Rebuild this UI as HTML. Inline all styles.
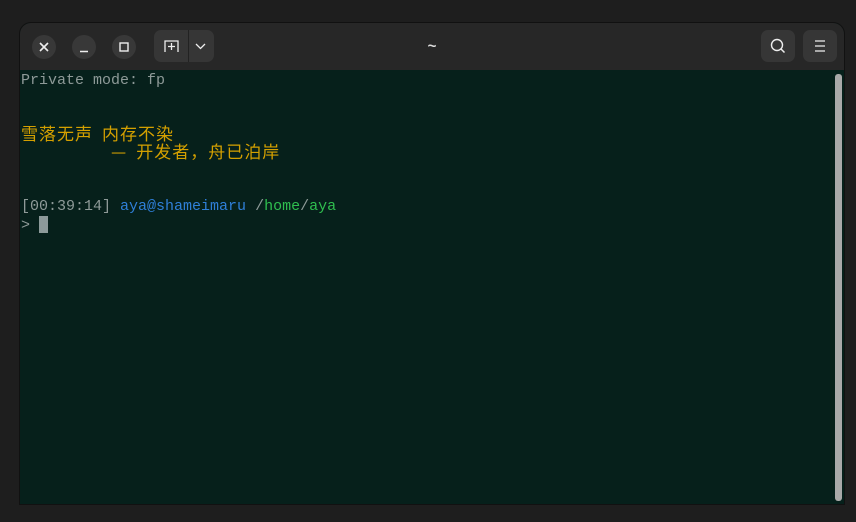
<!DOCTYPE html>
<html><head><meta charset="utf-8"><style>
html,body{margin:0;padding:0;width:856px;height:522px;background:#1e1e1e;overflow:hidden}
.win{position:absolute;left:19px;top:22px;width:826px;height:483px;border-radius:12px 12px 0 0;background:#06201b;border:1px solid #111;box-sizing:border-box;overflow:hidden}
.hdr{position:absolute;left:0;top:0;right:0;height:47px;background:#272727}
.cb{position:absolute;top:12px;width:24px;height:24px;border-radius:50%;background:#383838}
.btn{position:absolute;top:7px;height:32px;border-radius:7px;background:#363636}
.term{position:absolute;left:1px;top:49px;font-family:"Liberation Mono","Noto Sans CJK SC",monospace;font-size:15px;color:#8e9a98;white-space:pre}
.term div{height:18px;line-height:18px;overflow:visible}
.y{color:#d4a000}.b{color:#2f7fd8}.g{color:#2fbf4f}
.c{font-family:"Noto Sans CJK SC",sans-serif;letter-spacing:1px;font-size:17px;line-height:18px;position:relative;top:-2px}
.cur{display:inline-block;width:9px;height:17px;background:#8c9a9a;vertical-align:-4px}
.sb{position:absolute;left:815px;top:51px;width:7px;height:427px;border-radius:3px;background:#a9a9a9}
</style></head><body>
<div class="win">
<div class="hdr">
<div class="cb" style="left:12px"><svg width="24" height="24"><path d="M8 8L16 16M16 8L8 16" stroke="#eee" stroke-width="1.6"/></svg></div>
<div class="cb" style="left:52px"><svg width="24" height="24"><path d="M8 16.5H16" stroke="#eee" stroke-width="1.4"/></svg></div>
<div class="cb" style="left:92px"><svg width="24" height="24"><rect x="8" y="8" width="8" height="8" fill="none" stroke="#eee" stroke-width="1.4"/></svg></div>
<div class="btn" style="left:134px;width:60px"><svg width="60" height="32"><path d="M11 22V11H24V22M14 16.5H21M17.5 13V20" fill="none" stroke="#eee" stroke-width="1.3"/><line x1="34.5" y1="0" x2="34.5" y2="32" stroke="#222"/><path d="M42 14L46.5 18.5L51 14" fill="none" stroke="#eee" stroke-width="1.3"/></svg></div>
<div style="position:absolute;left:0;right:0;top:15px;text-align:center;color:#ddd;font:bold 15px 'Liberation Sans',sans-serif">~</div>
<div class="btn" style="left:741px;width:34px"><svg width="34" height="32"><circle cx="16" cy="15" r="5.5" fill="none" stroke="#eee" stroke-width="1.4"/><path d="M20 19L23.5 22.5" stroke="#eee" stroke-width="1.5"/></svg></div>
<div class="btn" style="left:783px;width:34px"><svg width="34" height="32"><path d="M12 11H22M12 16H22M12 21H22" stroke="#eee" stroke-width="1.3"/></svg></div>
</div>
<div class="term"><div>Private mode: fp</div><div></div><div></div><div class="y"><span class="c">雪落无声</span> <span class="c">内存不染</span></div><div class="y">          <span class="c">—</span> <span class="c">开发者，舟已泊岸</span></div><div></div><div></div><div>[00:39:14] <span class="b">aya@shameimaru</span> /<span class="g">home</span>/<span class="g">aya</span></div><div>&gt; <span class="cur"></span></div></div>
<div class="sb"></div>
</div>
</body></html>
